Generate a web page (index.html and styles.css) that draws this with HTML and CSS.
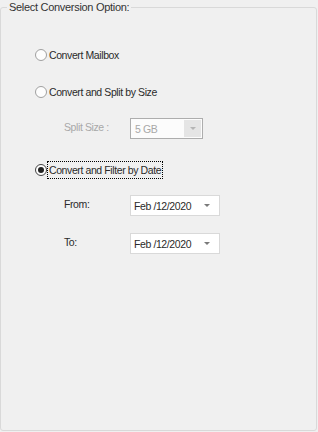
FILE: index.html
```html
<!DOCTYPE html>
<html lang="en">
<head>
    <meta charset="UTF-8">
    <title>Select Conversion Option</title>
    <link rel="stylesheet" href="styles.css">
</head>
<body>
    <fieldset class="group">
        <legend>Select Conversion Option:</legend>

        <div class="options">
            <label class="radio-row row-mailbox">
                <span class="radio"></span>
                <span class="radio-text">Convert Mailbox</span>
            </label>

            <label class="radio-row row-split">
                <span class="radio"></span>
                <span class="radio-text">Convert and Split by Size</span>
            </label>

            <div class="sub-row row-size disabled">
                <span class="sub-label">Split Size :</span>
                <div class="combo">
                    <span class="combo-value">5 GB</span>
                    <span class="combo-btn"><span class="arrow"></span></span>
                </div>
            </div>

            <label class="radio-row row-date">
                <span class="radio checked"></span>
                <span class="radio-text focused">Convert and Filter by Date</span>
            </label>

            <div class="sub-row row-from">
                <span class="sub-label">From:</span>
                <div class="date-picker">
                    <span class="date-value">Feb /12/2020</span>
                    <span class="arrow dark"></span>
                </div>
            </div>

            <div class="sub-row row-to">
                <span class="sub-label">To:</span>
                <div class="date-picker">
                    <span class="date-value">Feb /12/2020</span>
                    <span class="arrow dark"></span>
                </div>
            </div>
        </div>
    </fieldset>
</body>
</html>
```

FILE: styles.css
```css
:root {
    --bg: #f0f0f0;
    --group-border: #d9d9d9;
    --text: #2a2a2a;
    --disabled: #a8a8a8;
}

* {
    margin: 0;
    padding: 0;
    box-sizing: border-box;
}

body {
    font-family: 'Liberation Sans', Arial, sans-serif;
    font-size: 10.5px;
    letter-spacing: -0.4px;
    background-color: var(--bg);
    color: var(--text);
    width: 318px;
    height: 432px;
    overflow: hidden;
}

.group {
    width: 317px;
    height: 431px;
    border: 1px solid var(--group-border);
    border-radius: 3px;
    padding: 0;
}

.group legend {
    margin-left: 6px;
    padding: 0 2px;
    line-height: 14px;
    font-size: 11px;
    letter-spacing: -0.3px;
    color: #333;
}

.options {
    display: flex;
    flex-direction: column;
    padding-left: 34px;
}

.radio-row {
    display: flex;
    align-items: center;
    height: 16px;
    gap: 1px;
}

.row-mailbox { margin-top: 33px; }
.row-split { margin-top: 21px; }
.row-size { margin-top: 18px; }
.row-date { margin-top: 23px; }
.row-from { margin-top: 17px; }
.row-to { margin-top: 17px; }

.radio {
    width: 12px;
    height: 12px;
    border: 1px solid #a0a0a0;
    border-radius: 50%;
    background-color: #fdfdfd;
    display: flex;
    align-items: center;
    justify-content: center;
}

.radio.checked {
    border-color: #444;
}

.radio.checked::after {
    content: '';
    width: 6px;
    height: 6px;
    border-radius: 50%;
    background-color: #222;
}

.radio-text {
    line-height: 16px;
    padding: 0 1px;
}

.radio-text.focused {
    outline: 1px dotted #000;
}

.sub-row {
    display: flex;
    align-items: center;
    height: 21px;
    padding-left: 29px;
}

.sub-label {
    width: 66px;
    position: relative;
    top: -2px;
}

.disabled .sub-label {
    color: var(--disabled);
}

.combo {
    width: 73px;
    height: 21px;
    border: 1px solid #adadad;
    background-color: #fcfcfc;
    display: flex;
    align-items: center;
    padding: 1px;
}

.combo-value {
    flex: 1;
    padding-left: 3px;
    color: var(--disabled);
}

.combo-btn {
    width: 17px;
    height: 100%;
    background-color: #e5e5e5;
    display: flex;
    align-items: center;
    justify-content: center;
}

.arrow {
    width: 0;
    height: 0;
    border-left: 3px solid transparent;
    border-right: 3px solid transparent;
    border-top: 3px solid #b5b5b5;
}

.arrow.dark {
    border-top-color: #7a7a7a;
    margin-right: 9px;
}

.date-picker {
    width: 90px;
    height: 21px;
    border: 1px solid #d9d9d9;
    background-color: #ffffff;
    display: flex;
    align-items: center;
}

.date-value {
    flex: 1;
    padding-left: 3px;
}
```
